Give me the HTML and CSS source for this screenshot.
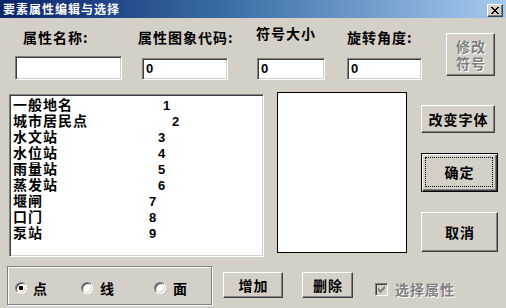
FILE: index.html
```html
<!DOCTYPE html>
<html lang="zh-CN">
<head>
<meta charset="utf-8">
<title>要素属性编辑与选择</title>
<link rel="stylesheet" href="styles.css">
</head>
<body>
<div class="window">
  <div class="titlebar">
    <span class="title">要素属性编辑与选择</span>
    <span class="close">
      <svg width="8" height="7" viewBox="0 0 8 7" shape-rendering="crispEdges">
        <path d="M0 0h2v1h-2zM6 0h2v1h-2zM1 1h2v1h-2zM5 1h2v1h-2zM2 2h4v1h-4zM3 3h2v1h-2zM2 4h4v1h-4zM1 5h2v1h-2zM5 5h2v1h-2zM0 6h2v1h-2zM6 6h2v1h-2z" fill="#000"/>
      </svg>
    </span>
  </div>

  <div class="top">
    <div class="field f1">
      <div class="lbl">属性名称:</div>
      <div class="input"></div>
    </div>
    <div class="field f2">
      <div class="lbl">属性图象代码:</div>
      <div class="input">0</div>
    </div>
    <div class="field f3">
      <div class="lbl">符号大小</div>
      <div class="input">0</div>
    </div>
    <div class="field f4">
      <div class="lbl">旋转角度:</div>
      <div class="input">0</div>
    </div>
    <div class="btn btn-mod disabled">修改<br>符号</div>
  </div>

  <div class="mid">
    <div class="listbox">
      <div class="row"><span class="nm w4">一般地名</span><span class="num">1</span></div>
      <div class="row"><span class="nm w5">城市居民点</span><span class="num">2</span></div>
      <div class="row"><span class="nm w3">水文站</span><span class="num">3</span></div>
      <div class="row"><span class="nm w3">水位站</span><span class="num">4</span></div>
      <div class="row"><span class="nm w3">雨量站</span><span class="num">5</span></div>
      <div class="row"><span class="nm w3">蒸发站</span><span class="num">6</span></div>
      <div class="row"><span class="nm w2">堰闸</span><span class="num">7</span></div>
      <div class="row"><span class="nm w2">口门</span><span class="num">8</span></div>
      <div class="row"><span class="nm w2">泵站</span><span class="num">9</span></div>
    </div>
    <div class="frame"></div>
    <div class="rcol">
      <div class="btn b-font">改变字体</div>
      <div class="btn b-ok"><span class="focus">确定</span></div>
      <div class="btn b-cancel">取消</div>
    </div>
  </div>

  <div class="bottom">
    <div class="group">
      <label class="radio r1"><span class="rb on"></span>点</label>
      <label class="radio r2"><span class="rb"></span>线</label>
      <label class="radio r3"><span class="rb"></span>面</label>
    </div>
    <div class="btn b-add">增加</div>
    <div class="btn b-del">删除</div>
    <div class="check">
      <span class="cb">
        <svg width="7" height="7" viewBox="0 0 7 7" shape-rendering="crispEdges">
          <path d="M6 0h1v3h-1zM5 1h1v3h-1zM4 2h1v3h-1zM3 3h1v3h-1zM2 4h1v3h-1zM1 3h1v3h-1zM0 2h1v3h-1z" fill="#808080"/>
        </svg>
      </span>
      <span class="dis">选择属性</span>
    </div>
  </div>
</div>
</body>
</html>
```

FILE: styles.css
```css
* { box-sizing: border-box; }
html, body { margin: 0; padding: 0; background: #d4d0c8; }
body { font-family: "Noto Sans CJK SC", "Noto Sans", sans-serif; color: #000; }

.window {
  width: 506px;
  height: 308px;
  background: #d4d0c8;
  overflow: hidden;
  display: flex;
  flex-direction: column;
}

/* title bar */
.titlebar {
  height: 18px;
  flex: none;
  display: flex;
  align-items: center;
  padding-left: 3px;
  background: linear-gradient(to right, #0a246a 0%, #3a6ea5 45%, #a6caf0 100%);
}
.title {
  color: #fff;
  font-weight: 700;
  font-size: 12px;
  letter-spacing: 1px;
  line-height: 18px;
  white-space: nowrap;
}
.close {
  margin-left: auto;
  margin-right: 3px;
  margin-top: 2px;
  width: 16px;
  height: 13px;
  background: #d4d0c8;
  border: 1px solid;
  border-color: #fff #404040 #404040 #fff;
  box-shadow: inset -1px -1px #808080;
  display: flex;
  align-items: center;
  justify-content: center;
}
.close svg { display: block; }

/* generic */
.lbl {
  font-size: 14px;
  font-weight: 700;
  letter-spacing: 1px;
  line-height: 18px;
  white-space: nowrap;
  margin-top: 10px;
}
.input {
  height: 22px;
  margin-top: 12px;
  background: #fff;
  border: 1px solid;
  border-color: #808080 #fff #fff #808080;
  box-shadow: inset 1px 1px #404040, inset -1px -1px #d4d0c8;
  padding: 1px 3px 0 3px;
  font: 700 13px/18px "Liberation Sans", Arial, sans-serif;
}
.btn {
  display: flex;
  align-items: center;
  justify-content: center;
  background: #d4d0c8;
  border: 1px solid;
  border-color: #fff #404040 #404040 #fff;
  box-shadow: inset -1px -1px #808080;
  font-size: 14px;
  font-weight: 700;
  letter-spacing: 1px;
  line-height: 16px;
  text-align: center;
  padding-left: 1px;
  white-space: nowrap;
  flex: none;
}
.disabled {
  color: #808080;
  text-shadow: 1px 1px #fff;
}

/* top area */
.top {
  height: 74px;
  flex: none;
  display: flex;
  align-items: flex-start;
}
.field { display: flex; flex-direction: column; flex: none; }
.f1 { margin-left: 15px; width: 107px; }
.f1 .lbl { padding-left: 8px; }
.f1 .input { height: 24px; margin-top: 10px; }
.f2 { margin-left: 16px; width: 94px; }
.f2 .input { margin-left: 4px; width: 86px; }
.f3 { margin-left: 24px; width: 69px; }
.f3 .lbl { margin-top: 6px; }
.f3 .input { margin-left: 1px; width: 68px; margin-top: 16px; }
.f4 { margin-left: 22px; width: 75px; }
.btn-mod {
  margin-left: 24px;
  margin-top: 15px;
  width: 49px;
  height: 43px;
  line-height: 17px;
}

/* middle area */
.mid {
  height: 174px;
  flex: none;
  display: flex;
  align-items: flex-start;
}
.listbox {
  margin-left: 9px;
  margin-top: 2px;
  width: 255px;
  height: 163px;
  background: #fff;
  border: 1px solid;
  border-color: #808080 #fff #fff #808080;
  box-shadow: inset 1px 1px #404040, inset -1px -1px #d4d0c8;
  padding: 1px 0 0 3px;
}
.row {
  display: flex;
  align-items: baseline;
  height: 16px;
  line-height: 16px;
  font-size: 14px;
  font-weight: 700;
  white-space: nowrap;
}
.nm { letter-spacing: 1px; flex: none; }
.w2 { width: 136px; }
.w3 { width: 145px; }
.w4 { width: 150px; }
.w5 { width: 159px; }
.num { font: 700 13px/16px "Liberation Sans", Arial, sans-serif; }

.frame {
  margin-left: 13px;
  width: 130px;
  height: 161px;
  background: #fff;
  border: 1px solid #000;
  flex: none;
}
.rcol {
  margin-left: 14px;
  display: flex;
  flex-direction: column;
  align-items: flex-start;
}
.b-font { margin-top: 13px; width: 74px; height: 28px; }
.b-ok {
  margin-top: 20px;
  width: 77px;
  height: 39px;
  border: 1px solid #000;
  box-shadow: inset 1px 1px #fff, inset -1px -1px #404040, inset -2px -2px #808080;
  padding: 3px 4px 4px 3px;
  align-items: stretch;
}
.focus {
  flex: 1;
  display: flex;
  align-items: center;
  justify-content: center;
  border: 1px dotted #000;
  padding-left: 1px;
}
.b-cancel { margin-top: 20px; width: 77px; height: 40px; }

/* bottom */
.bottom {
  flex: none;
  display: flex;
  align-items: flex-start;
}
.group {
  margin-left: 7px;
  width: 205px;
  height: 39px;
  border: 1px solid #808080;
  box-shadow: inset 1px 1px #fff, 1px 1px #fff;
  display: flex;
  align-items: center;
  padding: 4px 0 0 7px;
}
.radio {
  display: flex;
  align-items: center;
  font-size: 14px;
  font-weight: 700;
  line-height: 16px;
  flex: none;
}
.r1 { width: 66px; }
.r2 { width: 73px; }
.r3 { width: 50px; }
.rb {
  width: 12px;
  height: 12px;
  border-radius: 50%;
  border: 1px solid;
  border-color: #808080 #fff #fff #808080;
  box-shadow: inset 1px 1px #404040, inset -1px -1px #d4d0c8;
  background: #fff;
  margin-right: 7px;
  flex: none;
}
.r1 .rb { margin-right: 6px; }
.rb.on { background: radial-gradient(circle at 50% 50%, #000 0, #000 2px, #fff 2.6px); }

.b-add { margin-left: 11px; margin-top: 6px; width: 60px; height: 26px; }
.b-del { margin-left: 19px; margin-top: 6px; width: 51px; height: 26px; }

.check {
  margin-left: 22px;
  margin-top: 15px;
  display: flex;
  align-items: center;
}
.cb {
  width: 13px;
  height: 13px;
  border: 1px solid;
  border-color: #808080 #fff #fff #808080;
  box-shadow: inset 1px 1px #404040, inset -1px -1px #d4d0c8;
  background: #d4d0c8;
  display: flex;
  align-items: center;
  justify-content: center;
  flex: none;
}
.cb svg { display: block; }
.dis {
  margin-left: 7px;
  font-size: 14px;
  font-weight: 700;
  letter-spacing: 1px;
  line-height: 16px;
  color: #808080;
  text-shadow: 1px 1px #fff;
  white-space: nowrap;
}
```
